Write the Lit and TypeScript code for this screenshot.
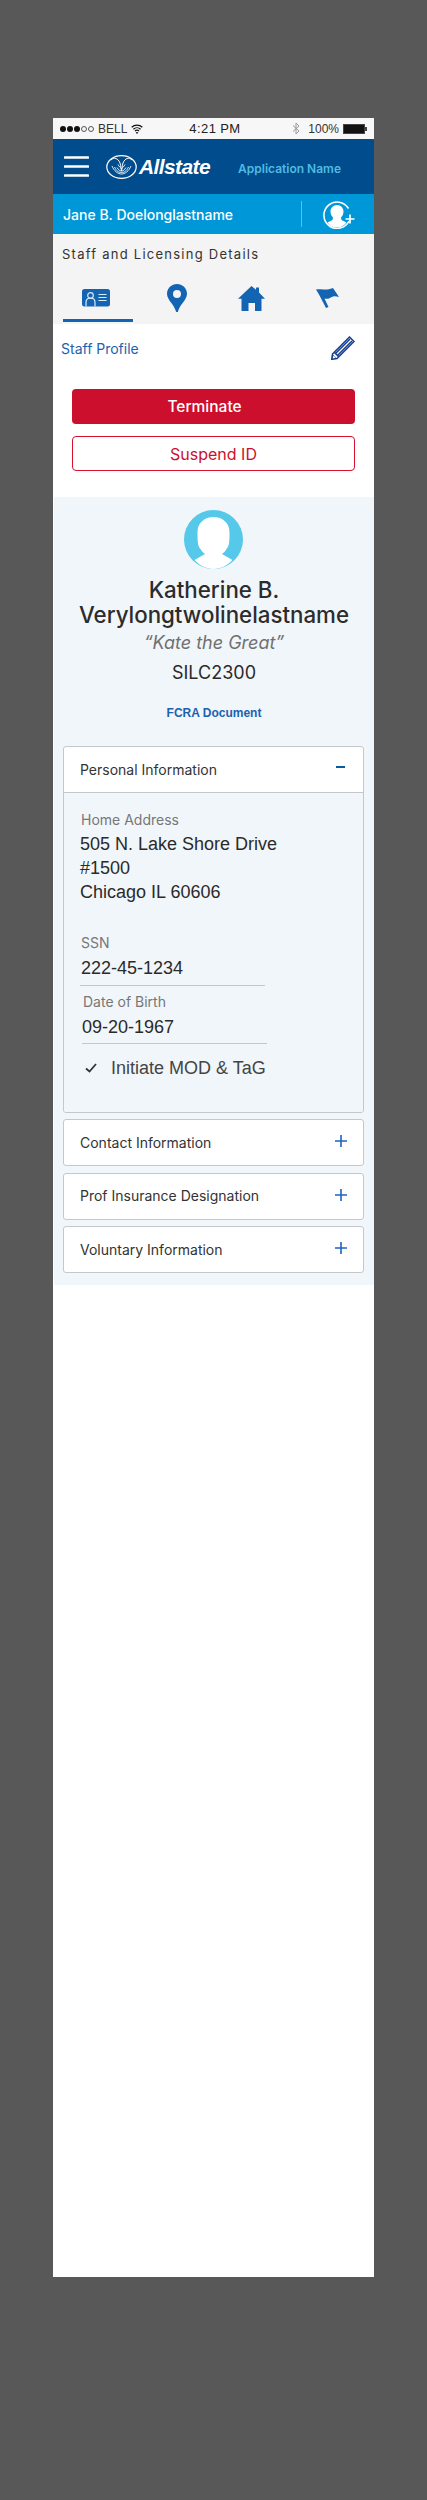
import { LitElement, html, css, svg } from "lit";
import { customElement } from "lit/decorators.js";

const plus = svg`<svg class="ic" width="12" height="12" viewBox="0 0 12 12"><path d="M6 0v12M0 6h12" stroke="#1f63c0" stroke-width="1.6" fill="none"/></svg>`;

@customElement("app-root")
export class AppRoot extends LitElement {
  static styles = css`
    :host { display: block; height: 2500px; background: #585858; font-family: Inter, "Liberation Sans", sans-serif; overflow: hidden; padding-top: 118px; box-sizing: border-box; }
    .phone { margin-left: 53px; width: 321px; height: 2159px; background: #fff; }
    .status { height: 21px; background: #f7f7f7; display: flex; align-items: center; font: 12px "Liberation Sans", sans-serif; color: #333; padding: 0 7px; box-sizing: border-box; }
    .dots { display: flex; gap: 1px; margin-right: 4px; }
    .dot { width: 6px; height: 6px; border-radius: 50%; background: #111; }
    .dot.off { background: none; box-sizing: border-box; border: 0.7px solid #555; }
    .bell { margin-right: 4px; }
    .time { font-size: 13px; letter-spacing: 0.4px; color: #222; margin-left: 46px; white-space: nowrap; }
    .right { margin-left: auto; display: flex; align-items: center; }
    .pct { margin-left: 8px; margin-right: 4px; }
    .head { height: 55px; background: #004c8c; display: flex; align-items: center; }
    .burger { margin-left: 11px; margin-right: 17px; display: block; }
    .brand { font: italic 700 21px "Liberation Sans", sans-serif; color: #fff; letter-spacing: -0.6px; margin-left: 2px; }
    .app { font-weight: 600; font-size: 12px; color: #4fbbe3; margin-left: 28px; margin-top: 3px; white-space: nowrap; }
    .user { height: 40px; background: #0097d8; display: flex; align-items: center; color: #fff; padding-left: 10px; font-weight: 500; font-size: 14px; }
    .user .nm { width: 238px; white-space: nowrap; }
    .divider { width: 1px; height: 26px; background: #5cbfe9; margin-right: 21px; margin-top: -1px; }
    .details { height: 90px; background: #f4f4f4; box-sizing: border-box; padding-top: 10px; }
    .title { margin-left: 9px; font-size: 13px; letter-spacing: 1.25px; color: #333; line-height: 20px; }
    .tabs { display: flex; align-items: center; height: 30px; margin-top: 19px; }
    .tabs svg { display: block; }
    .t1 { margin-left: 29px; }
    .t2 { margin-left: 57px; }
    .t3 { margin-left: 51px; }
    .t4 { margin-left: 51px; }
    .bar { width: 70px; height: 3px; background: #1464b4; margin: 6px 0 0 10px; }
    .sub { display: flex; justify-content: space-between; padding: 11px 19px 0 8px; height: 64px; box-sizing: border-box; margin-top: 1px; color: #1b62b0; font-size: 14px; }
    .sub span { line-height: 24px; margin-top: 1px; }
    .btn { margin: 0 19px; height: 35px; border-radius: 4px; display: flex; align-items: center; justify-content: center; font-weight: 500; font-size: 15.5px; box-sizing: border-box; }
    .red { background: #cc0f2c; color: #fff; padding-right: 18px; }
    .out { margin-top: 12px; border: 1px solid #d8112f; color: #cc0f2c; font-weight: 400; font-size: 16px; }
    .profile { margin: 26px 0 0 1px; height: 788px; background: #f1f6fa; padding-top: 13px; box-sizing: border-box; text-align: center; }
    .avatar { display: block; margin: 0 auto 0 130px; }
    .name { font-size: 22.3px; font-weight: 500; line-height: 25px; color: #2c2c2c; margin-top: 8px; }
    .nick { font-size: 18px; font-style: italic; color: #707070; line-height: 24px; margin-top: 4px; }
    .id { font-size: 18px; color: #2a2a2a; line-height: 24px; margin-top: 6px; }
    .fcra { font: 700 12px "Liberation Sans", sans-serif; color: #1b62b0; line-height: 16px; margin-top: 20px; }
    .cards { text-align: left; margin: 25px 10px 0 9px; }
    .card { border: 1px solid #c4c8cc; border-radius: 3px; background: #fff; margin-bottom: 6.5px; box-sizing: border-box; }
    .card.open { margin-bottom: 6px; }
    .hd { height: 45px; display: flex; align-items: center; justify-content: space-between; padding: 0 16px 1px 16px; box-sizing: border-box; font-size: 14px; color: #333; }
    .hd .minus { width: 9px; height: 2px; background: #0b5aa0; margin-top: -4px; margin-right: 2px; }
    .hd .ic { margin-top: -2px; display: block; }
    .body { background: #f1f6fa; border-top: 1px solid #c4c8cc; height: 320px; padding: 17px 0 0 16px; box-sizing: border-box; border-radius: 0 0 3px 3px; }
    .lab { font-size: 14px; color: #777; line-height: 20px; margin-left: 1px; }
    .val { font: 18px/24px "Liberation Sans", sans-serif; color: #2a2a2a; margin-top: 2px; }
    .ssn { margin-top: 29px; }
    .ssn .lab, .ssn .val { margin-left: 1px; }
    .ssn .val, .dob .val { margin-top: 3px; }
    .rule { width: 185px; height: 1px; background: #c4c8cc; margin-top: 5px; }
    .dob { margin-top: 6px; margin-left: 2px; }
    .dob .rule { margin-top: 4px; }
    .check { display: flex; align-items: center; margin-left: 5px; margin-top: 12px; font: 18px/24px "Liberation Sans", sans-serif; color: #444; }
    .check svg { margin-right: 14px; }
  `;

  render() {
    return html`<div class="phone">
      <div class="status">
        <div class="dots"><i class="dot"></i><i class="dot"></i><i class="dot"></i><i class="dot off"></i><i class="dot off"></i></div>
        <span class="bell">BELL</span>
        <svg width="12" height="10" viewBox="0 0 12 10"><path d="M0.700 3.200a7.600 7.600 0 0 1 10.600 0M2.400 5.200a5.200 5.200 0 0 1 7.200 0M4 7a2.800 2.800 0 0 1 4 0" stroke="#111" stroke-width="1.200" fill="none"/><path d="M6 10l-1.300-1.500a2 2 0 0 1 2.600 0z" fill="#111"/></svg>
        <span class="time">4:21 PM</span>
        <div class="right">
          <svg width="8" height="13" viewBox="0 0 8 13"><path d="M1 3.500l6 5.500-3 3V1l3 3-6 5.500" stroke="#999" stroke-width="1" fill="none"/></svg>
          <span class="pct">100%</span>
          <svg width="24" height="10" viewBox="0 0 24 10"><rect x=".5" y=".5" width="21" height="9" fill="#111" stroke="#444"/><rect x="22" y="3" width="2" height="4" fill="#444"/></svg>
        </div>
      </div>
      <div class="head">
        <svg class="burger" width="25" height="21" viewBox="0 0 25 21"><path d="M1 1.500h23M1 10.500h23M1 19.500h23" stroke="#fff" stroke-width="2.600" stroke-linecap="round"/></svg>
        <svg width="31" height="24" viewBox="0 0 31 24" fill="none" stroke="#fff">
          <ellipse cx="15.500" cy="12" rx="14.700" ry="11.300" stroke-width="1.200"/>
          <path d="M5 5c3-3 7-2 9 3 1 3 1 6 1.500 8M26 5c-3-3-7-2-9 3-1 3-1 6-1.500 8" stroke-width="1"/>
          <path d="M6 11c2 5 6 8 9.500 8s7.500-3 9.500-8M8.500 12c2 4 4 5.500 7 5.500s5-1.500 7-5.500M11 12.500c1.500 2.500 3 3.500 4.500 3.500s3-1 4.500-3.500M12 9.500c1 2 2 3 3.500 4 1.500-1 2.500-2 3.500-4" stroke-width=".9"/>
        </svg>
        <span class="brand">Allstate</span>
        <span class="app">Application Name</span>
      </div>
      <div class="user">
        <span class="nm">Jane B. Doelonglastname</span>
        <i class="divider"></i>
        <svg width="32" height="29" viewBox="0 0 32 29">
          <path d="M25.500 8.500A13.200 13.200 0 1 0 26 21" stroke="#fff" stroke-width="1.600" fill="none"/>
          <path d="M14 5c4 0 6.500 3 6.500 6.500 0 2.500-1 4.500-2.500 6l.5 2.500 5 2.500c-2 3-5.500 5-9.500 5s-7.500-2-9.500-5l5-2.500.5-2.500c-1.500-1.500-2.500-3.500-2.500-6C7.500 8 10 5 14 5z" fill="#fff"/>
          <path d="M27 14.500v9M22.500 19h9" stroke="#fff" stroke-width="1.700"/>
        </svg>
      </div>
      <div class="details">
        <div class="title">Staff and Licensing Details</div>
        <div class="tabs">
          <svg class="t1" width="28" height="18" viewBox="0 0 28 18">
            <rect width="28" height="17.500" rx="2.500" fill="#1464b4"/>
            <circle cx="8.500" cy="6.500" r="2.800" fill="none" stroke="#dfe9f4" stroke-width="1.200"/>
            <path d="M4 17.500v-4c0-3 2-4.500 4.500-4.500s4.500 1.500 4.500 4.500v4" fill="none" stroke="#dfe9f4" stroke-width="1.200"/>
            <path d="M16.500 5.500h8M16.500 8.500h8M16.500 11.500h8" stroke="#dfe9f4" stroke-width="1.200"/>
          </svg>
          <svg class="t2" width="20" height="28" viewBox="0 0 20 28"><path fill-rule="evenodd" d="M10 0c5.500 0 10 4.300 10 9.800 0 6.200-7 10.200-9.200 18.200H9.200C7 20 0 16 0 9.800 0 4.300 4.500 0 10 0zm0 6a4 4 0 1 0 0 8 4 4 0 0 0 0-8z" fill="#1464b4"/></svg>
          <svg class="t3" width="27" height="25" viewBox="0 0 27 25"><path d="M13.500 0l4.500 3.800V1.500h3v5l6 6.300h-3.500V25h-6.500v-8h-6.500v8H3.500V12.800H0z" fill="#1464b4"/></svg>
          <svg class="t4" width="23" height="20" viewBox="0 0 23 20"><path d="M0 1.500C5 .5 8 2 11 1.500S15 .5 17 0l6 9c-4-1-6-1-9 1-2 1-4 1-5.500.5L12.500 19 10 20 3 6.500z" fill="#1464b4"/></svg>
        </div>
        <div class="bar"></div>
      </div>
      <div class="sub">
        <span>Staff Profile</span>
        <svg width="24" height="24" viewBox="0 0 24 24" fill="none" stroke="#173f8f">
          <path d="M1.500 18L18.500 1l4.500 4.500L6 22.500 .7 23.300z" stroke-width="1.500" fill="#fff"/>
          <path d="M5 17L19 3M7 19L21 5M3.500 16.500l4 4" stroke-width="1.600"/>
          <path d="M.7 23.300l1-5 4.300 4.500z" fill="#173f8f" stroke="none"/>
          <path d="M2.400 19.500l2.300 2.300-3 .7z" fill="#fff" stroke="none"/>
        </svg>
      </div>
      <div class="btn red">Terminate</div>
      <div class="btn out">Suspend ID</div>
      <div class="profile">
        <svg class="avatar" width="59" height="59" viewBox="0 0 59 59">
          <circle cx="29.500" cy="29.500" r="29.500" fill="#56c8ea"/>
          <path d="M29.500 7c9 0 16 6 16 15 0 8 0 14-3 17-1 2-3 4-4.500 5L48.500 50C44 55 37 59 29.500 59S15 55 10.500 50L21 44c-1.500-1-3.500-3-4.500-5-3-3-3-9-3-17 0-9 7-15 16-15z" fill="#fff"/>
        </svg>
        <div class="name">Katherine B.<br />Verylongtwolinelastname</div>
        <div class="nick">“Kate the Great”</div>
        <div class="id">SILC2300</div>
        <div class="fcra">FCRA Document</div>
        <div class="cards">
          <div class="card open">
            <div class="hd"><span>Personal Information</span><i class="minus"></i></div>
            <div class="body">
              <div class="lab">Home Address</div>
              <div class="val">505 N. Lake Shore Drive<br />#1500<br />Chicago IL 60606</div>
              <div class="ssn"><div class="lab">SSN</div><div class="val">222-45-1234</div></div>
              <div class="rule"></div>
              <div class="dob"><div class="lab">Date of Birth</div><div class="val">09-20-1967</div><div class="rule"></div></div>
              <div class="check"><svg width="12" height="10" viewBox="0 0 12 10"><path d="M1 5.500l3.500 3L11 1" stroke="#333" stroke-width="1.800" fill="none"/></svg>Initiate MOD &amp; TaG</div>
            </div>
          </div>
          ${["Contact Information", "Prof Insurance Designation", "Voluntary Information"].map(
            (t) => html`<div class="card"><div class="hd"><span>${t}</span>${plus}</div></div>`
          )}
        </div>
      </div>
    </div>`;
  }
}
